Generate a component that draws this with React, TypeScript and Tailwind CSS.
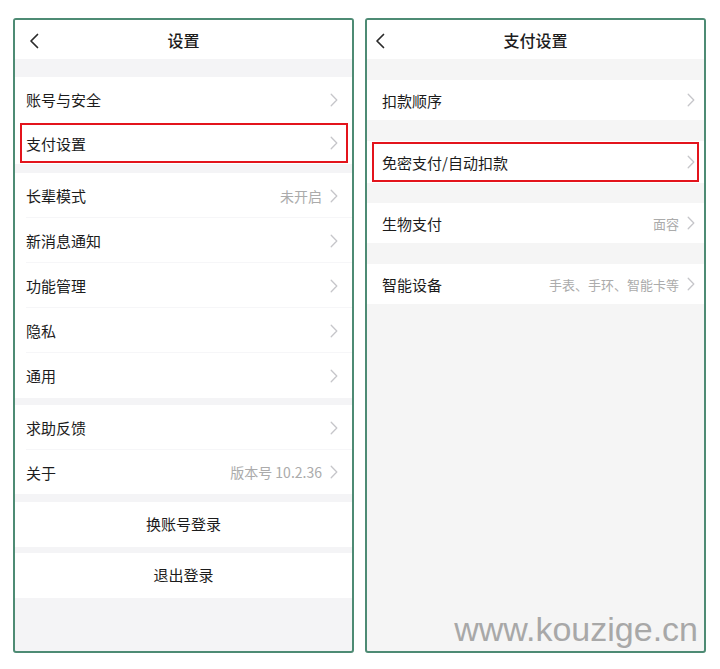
import React from "react";

const FONT = { fontFamily: '"Noto Sans CJK SC", "Noto Sans", sans-serif' };

function Chevron() {
  return (
    <svg width="8" height="14" viewBox="0 0 8 14" className="shrink-0">
      <path d="M1.2 1.2 L6.8 7 L1.2 12.8" fill="none" stroke="#c6c6ca" strokeWidth="1.3" strokeLinecap="round" strokeLinejoin="round" />
    </svg>
  );
}

function Back() {
  return (
    <svg width="10" height="16" viewBox="0 0 10 16">
      <path d="M8.5 1.5 L2 8 L8.5 14.5" fill="none" stroke="#2a2a2a" strokeWidth="1.7" strokeLinecap="round" strokeLinejoin="round" />
    </svg>
  );
}

type RowProps = {
  label: string;
  value?: string;
  h: string;
  pl: string;
  pr: string;
  divider?: boolean;
  red?: string;
  valueSize?: string;
};

function Row({ label, value, h, pl, pr, divider, red, valueSize }: RowProps) {
  return (
    <div className={`relative bg-white ${h} flex items-center ${pl} ${pr} shrink-0`}>
      <span className="flex-1 text-[15px] text-[#1c1c1c] leading-none">{label}</span>
      {value && (
        <span className={`${valueSize ?? "text-[14px]"} text-[#ababab] leading-none mr-[8px]`}>{value}</span>
      )}
      <Chevron />
      {divider && <div className="absolute left-[11px] right-0 bottom-0 h-px bg-[#f6f6f8]" />}
      {red && <div className={`absolute ${red} border-2 border-[#e3141c]`} />}
    </div>
  );
}

export default function App() {
  return (
    <div className="w-[720px] h-[669px] bg-white flex gap-[11px] pl-[13px] pt-[18px]" style={FONT}>
      {/* Left panel */}
      <div className="w-[341px] h-[635px] border-2 border-[#4e8b74] rounded-[3px] overflow-hidden bg-[#f4f4f6] flex flex-col">
        <div className="relative h-[39px] bg-white flex items-center justify-center shrink-0">
          <div className="absolute left-[14px] top-[13px]">
            <Back />
          </div>
          <span className="text-[16px] font-medium text-[#1c1c1c]">设置</span>
        </div>
        <div className="h-[18px] shrink-0" />
        <Row label="账号与安全" h="h-[45px]" pl="pl-[11px]" pr="pr-[14px]" />
        <Row label="支付设置" h="h-[42px]" pl="pl-[11px]" pr="pr-[14px]" red="left-[5px] right-[4px] top-[1px] bottom-[1px]" />
        <div className="h-[9px] shrink-0" />
        <Row label="长辈模式" value="未开启" h="h-[45px]" pl="pl-[11px]" pr="pr-[14px]" divider />
        <Row label="新消息通知" h="h-[45px]" pl="pl-[11px]" pr="pr-[14px]" divider />
        <Row label="功能管理" h="h-[45px]" pl="pl-[11px]" pr="pr-[14px]" divider />
        <Row label="隐私" h="h-[45px]" pl="pl-[11px]" pr="pr-[14px]" divider />
        <Row label="通用" h="h-[45px]" pl="pl-[11px]" pr="pr-[14px]" />
        <div className="h-[7px] shrink-0" />
        <Row label="求助反馈" h="h-[45px]" pl="pl-[11px]" pr="pr-[14px]" divider />
        <Row label="关于" value="版本号 10.2.36" h="h-[44px]" pl="pl-[11px]" pr="pr-[14px]" />
        <div className="h-[8px] shrink-0" />
        <div className="h-[45px] bg-white flex items-center justify-center text-[15px] text-[#1c1c1c] shrink-0">换账号登录</div>
        <div className="h-[6px] shrink-0" />
        <div className="h-[45px] bg-white flex items-center justify-center text-[15px] text-[#1c1c1c] shrink-0">退出登录</div>
      </div>

      {/* Right panel */}
      <div className="w-[341px] h-[635px] border-2 border-[#4e8b74] rounded-[3px] overflow-hidden bg-[#f5f5f5] flex flex-col">
        <div className="relative h-[39px] bg-white flex items-center justify-center shrink-0">
          <div className="absolute left-[8px] top-[13px]">
            <Back />
          </div>
          <span className="text-[16px] font-medium text-[#1c1c1c]">支付设置</span>
        </div>
        <div className="h-[21px] shrink-0" />
        <Row label="扣款顺序" h="h-[40px]" pl="pl-[15px]" pr="pr-[9px]" />
        <div className="h-[21px] shrink-0" />
        <Row label="免密支付/自动扣款" h="h-[42px]" pl="pl-[15px]" pr="pr-[9px]" red="left-[5px] right-[5px] top-[1px] bottom-[1px]" />
        <div className="h-[20px] shrink-0" />
        <Row label="生物支付" value="面容" valueSize="text-[13px]" h="h-[40px]" pl="pl-[15px]" pr="pr-[9px]" />
        <div className="h-[21px] shrink-0" />
        <Row label="智能设备" value="手表、手环、智能卡等" valueSize="text-[13px]" h="h-[40px]" pl="pl-[15px]" pr="pr-[9px]" />
        <div className="flex-1 flex items-end justify-end pr-[6px] pb-[5px]">
          <span
            className="text-[34px] leading-none text-[#a8a8a8]"
            style={{ fontFamily: '"Liberation Sans", Arial, sans-serif' }}
          >
            www.kouzige.cn
          </span>
        </div>
      </div>
    </div>
  );
}
